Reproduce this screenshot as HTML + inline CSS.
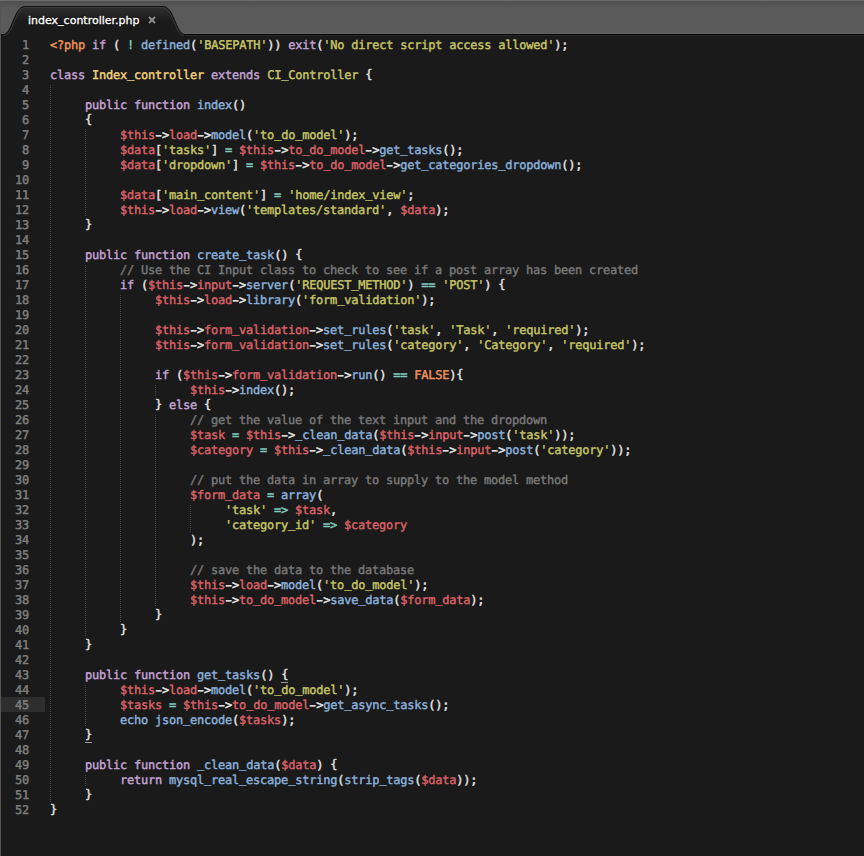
<!DOCTYPE html>
<html><head><meta charset="utf-8"><title>index_controller.php</title>
<style>
html,body{margin:0;padding:0;background:#1a1a1a;}
body{width:864px;height:856px;position:relative;overflow:hidden;font-family:"DejaVu Sans Mono","Liberation Mono",monospace;}
#tabbar{position:absolute;left:0;top:0;width:864px;height:36px;}
#tabtitle{position:absolute;left:28px;top:12.5px;font:11px/16px "DejaVu Sans","Liberation Sans",sans-serif;color:#fff;text-shadow:0 -1px 0 #000;white-space:pre;-webkit-text-stroke:0.3px #fff;}
#tabx{position:absolute;left:148px;top:16px;}
#lb{position:absolute;left:0;top:1px;width:1px;height:855px;background:#555;}
#hl{position:absolute;left:1px;top:697px;width:44px;height:15px;background:#2e2e2e;}
#code{position:absolute;left:0;top:38px;-webkit-text-stroke:0.4px;width:864px;font-size:12px;letter-spacing:-0.2246px;line-height:15px;color:#e6e6e6;white-space:pre;text-rendering:geometricPrecision;}
.ln{position:absolute;left:0;width:29px;text-align:right;color:#808080;height:15px;}
.cl{margin-left:50px;height:15px;}
.c{color:#797979}.s{color:#c7c666}.o{color:#f0955a}.r{color:#dc6268}.a{color:#80cabc}
.b{color:#8cb2de}.k{color:#c7a5d8}.y{color:#f6d37f}.u{border-bottom:1px solid #9c9c9c}.n{position:relative;top:-1px}.d{display:inline-block;width:7px;letter-spacing:0;transform:scaleX(1.55);transform-origin:50% 50%;-webkit-text-stroke:0.6px}
.g{position:absolute;width:1px;background:repeating-linear-gradient(to bottom,#4c4c4c 0,#4c4c4c 1px,transparent 1px,transparent 2px);}
</style></head><body>
<svg id="tabbar" width="864" height="36" viewBox="0 0 864 36">
<defs><linearGradient id="tb" gradientUnits="userSpaceOnUse" x1="0" y1="1" x2="0" y2="9"><stop offset="0" stop-color="#4f4f4f"/><stop offset="1" stop-color="#5a5a5a"/></linearGradient>
<linearGradient id="tf" gradientUnits="userSpaceOnUse" x1="0" y1="7" x2="0" y2="22"><stop offset="0" stop-color="#2f2f2f"/><stop offset="1" stop-color="#1a1a1a"/></linearGradient></defs>
<rect x="0" y="0" width="864" height="34" fill="url(#tb)"/>
<rect x="0" y="0" width="864" height="1" fill="#6c6c6c"/>
<rect x="0" y="33" width="864" height="1" fill="#626262"/>
<rect x="0" y="34" width="864" height="1" fill="#000"/>
<rect x="0" y="35" width="864" height="1" fill="#2b2b2b"/>
<path d="M1 34.5 L3 34.5 C 12.5 34.5, 13.5 6.5, 25 6.5 L 163 6.5 C 174.5 6.5, 175.5 34.5, 185 34.5 L 186 34.5 L 186 36 L 1 36 Z" fill="url(#tf)"/>
<path d="M4 35.5 C 13.5 35.5, 14.5 7.5, 25.5 7.5 L 162.5 7.5 C 173.5 7.5, 174.5 35.5, 184 35.5" fill="none" stroke="#3b3b3b" stroke-width="1"/>
<path d="M0 34.5 L3 34.5 C 12.5 34.5, 13.5 6.5, 25 6.5 L 163 6.5 C 174.5 6.5, 175.5 34.5, 185 34.5 L 187 34.5" fill="none" stroke="#0c0c0c" stroke-width="0.9"/>
</svg>
<div id="tabtitle">index<span class="n">_</span>controller.php</div>
<svg id="tabx" width="8" height="8" viewBox="0 0 8 8"><path d="M1 1 L7 7 M7 1 L1 7" stroke="#929292" stroke-width="1.8" fill="none"/></svg>
<div id="lb"></div>
<div id="hl"></div>
<i class="g" style="left:50px;top:85px;height:717px"></i><i class="g" style="left:85px;top:129px;height:88px"></i><i class="g" style="left:85px;top:265px;height:372px"></i><i class="g" style="left:85px;top:685px;height:42px"></i><i class="g" style="left:85px;top:775px;height:12px"></i><i class="g" style="left:120px;top:295px;height:327px"></i><i class="g" style="left:155px;top:385px;height:12px"></i><i class="g" style="left:155px;top:415px;height:192px"></i><i class="g" style="left:190px;top:505px;height:27px"></i>
<div id="code"><div class="ln">1</div><div class="cl"><span class="o">&lt;?php</span> <span class="k">if</span> ( <span class="a">!</span> <span class="b">defined</span>(<span class="s">'BASEPATH'</span>)) <span class="k">exit</span>(<span class="s">'No direct script access allowed'</span>);</div><div class="ln">2</div><div class="cl"></div><div class="ln">3</div><div class="cl"><span class="k">class</span> <span class="y">Index<span class="n">_</span>controller</span> <span class="k">extends</span> <span class="s">CI<span class="n">_</span>Controller</span> <span class="n">{</span></div><div class="ln">4</div><div class="cl"></div><div class="ln">5</div><div class="cl">     <span class="k">public</span> <span class="k">function</span> <span class="b">index</span>()</div><div class="ln">6</div><div class="cl">     <span class="n">{</span></div><div class="ln">7</div><div class="cl">          <span class="r">$this</span><span class="d">-</span>&gt;<span class="r">load</span><span class="d">-</span>&gt;<span class="b">model</span>(<span class="s">'to<span class="n">_</span>do<span class="n">_</span>model'</span>);</div><div class="ln">8</div><div class="cl">          <span class="r">$data</span>[<span class="s">'tasks'</span>] <span class="a">=</span> <span class="r">$this</span><span class="d">-</span>&gt;<span class="r">to<span class="n">_</span>do<span class="n">_</span>model</span><span class="d">-</span>&gt;<span class="b">get<span class="n">_</span>tasks</span>();</div><div class="ln">9</div><div class="cl">          <span class="r">$data</span>[<span class="s">'dropdown'</span>] <span class="a">=</span> <span class="r">$this</span><span class="d">-</span>&gt;<span class="r">to<span class="n">_</span>do<span class="n">_</span>model</span><span class="d">-</span>&gt;<span class="b">get<span class="n">_</span>categories<span class="n">_</span>dropdown</span>();</div><div class="ln">10</div><div class="cl"></div><div class="ln">11</div><div class="cl">          <span class="r">$data</span>[<span class="s">'main<span class="n">_</span>content'</span>] <span class="a">=</span> <span class="s">'home/index<span class="n">_</span>view'</span>;</div><div class="ln">12</div><div class="cl">          <span class="r">$this</span><span class="d">-</span>&gt;<span class="r">load</span><span class="d">-</span>&gt;<span class="b">view</span>(<span class="s">'templates/standard'</span>, <span class="r">$data</span>);</div><div class="ln">13</div><div class="cl">     <span class="n">}</span></div><div class="ln">14</div><div class="cl"></div><div class="ln">15</div><div class="cl">     <span class="k">public</span> <span class="k">function</span> <span class="b">create<span class="n">_</span>task</span>() <span class="n">{</span></div><div class="ln">16</div><div class="cl">          <span class="c">// Use the CI Input class to check to see if a post array has been created</span></div><div class="ln">17</div><div class="cl">          <span class="k">if</span> (<span class="r">$this</span><span class="d">-</span>&gt;<span class="r">input</span><span class="d">-</span>&gt;<span class="b">server</span>(<span class="s">'REQUEST<span class="n">_</span>METHOD'</span>) <span class="a">==</span> <span class="s">'POST'</span>) <span class="n">{</span></div><div class="ln">18</div><div class="cl">               <span class="r">$this</span><span class="d">-</span>&gt;<span class="r">load</span><span class="d">-</span>&gt;<span class="b">library</span>(<span class="s">'form<span class="n">_</span>validation'</span>);</div><div class="ln">19</div><div class="cl"></div><div class="ln">20</div><div class="cl">               <span class="r">$this</span><span class="d">-</span>&gt;<span class="r">form<span class="n">_</span>validation</span><span class="d">-</span>&gt;<span class="b">set<span class="n">_</span>rules</span>(<span class="s">'task'</span>, <span class="s">'Task'</span>, <span class="s">'required'</span>);</div><div class="ln">21</div><div class="cl">               <span class="r">$this</span><span class="d">-</span>&gt;<span class="r">form<span class="n">_</span>validation</span><span class="d">-</span>&gt;<span class="b">set<span class="n">_</span>rules</span>(<span class="s">'category'</span>, <span class="s">'Category'</span>, <span class="s">'required'</span>);</div><div class="ln">22</div><div class="cl"></div><div class="ln">23</div><div class="cl">               <span class="k">if</span> (<span class="r">$this</span><span class="d">-</span>&gt;<span class="r">form<span class="n">_</span>validation</span><span class="d">-</span>&gt;<span class="b">run</span>() <span class="a">==</span> <span class="o">FALSE</span>)<span class="n">{</span></div><div class="ln">24</div><div class="cl">                    <span class="r">$this</span><span class="d">-</span>&gt;<span class="b">index</span>();</div><div class="ln">25</div><div class="cl">               <span class="n">}</span> <span class="k">else</span> <span class="n">{</span></div><div class="ln">26</div><div class="cl">                    <span class="c">// get the value of the text input and the dropdown</span></div><div class="ln">27</div><div class="cl">                    <span class="r">$task</span> <span class="a">=</span> <span class="r">$this</span><span class="d">-</span>&gt;<span class="b"><span class="n">_</span>clean<span class="n">_</span>data</span>(<span class="r">$this</span><span class="d">-</span>&gt;<span class="r">input</span><span class="d">-</span>&gt;<span class="b">post</span>(<span class="s">'task'</span>));</div><div class="ln">28</div><div class="cl">                    <span class="r">$category</span> <span class="a">=</span> <span class="r">$this</span><span class="d">-</span>&gt;<span class="b"><span class="n">_</span>clean<span class="n">_</span>data</span>(<span class="r">$this</span><span class="d">-</span>&gt;<span class="r">input</span><span class="d">-</span>&gt;<span class="b">post</span>(<span class="s">'category'</span>));</div><div class="ln">29</div><div class="cl"></div><div class="ln">30</div><div class="cl">                    <span class="c">// put the data in array to supply to the model method</span></div><div class="ln">31</div><div class="cl">                    <span class="r">$form<span class="n">_</span>data</span> <span class="a">=</span> <span class="b">array</span>(</div><div class="ln">32</div><div class="cl">                         <span class="s">'task'</span> <span class="a">=&gt;</span> <span class="r">$task</span>,</div><div class="ln">33</div><div class="cl">                         <span class="s">'category<span class="n">_</span>id'</span> <span class="a">=&gt;</span> <span class="r">$category</span></div><div class="ln">34</div><div class="cl">                    );</div><div class="ln">35</div><div class="cl"></div><div class="ln">36</div><div class="cl">                    <span class="c">// save the data to the database</span></div><div class="ln">37</div><div class="cl">                    <span class="r">$this</span><span class="d">-</span>&gt;<span class="r">load</span><span class="d">-</span>&gt;<span class="b">model</span>(<span class="s">'to<span class="n">_</span>do<span class="n">_</span>model'</span>);</div><div class="ln">38</div><div class="cl">                    <span class="r">$this</span><span class="d">-</span>&gt;<span class="r">to<span class="n">_</span>do<span class="n">_</span>model</span><span class="d">-</span>&gt;<span class="b">save<span class="n">_</span>data</span>(<span class="r">$form<span class="n">_</span>data</span>);</div><div class="ln">39</div><div class="cl">               <span class="n">}</span></div><div class="ln">40</div><div class="cl">          <span class="n">}</span></div><div class="ln">41</div><div class="cl">     <span class="n">}</span></div><div class="ln">42</div><div class="cl"></div><div class="ln">43</div><div class="cl">     <span class="k">public</span> <span class="k">function</span> <span class="b">get<span class="n">_</span>tasks</span>() <span class="u"><span class="n">{</span></span></div><div class="ln">44</div><div class="cl">          <span class="r">$this</span><span class="d">-</span>&gt;<span class="r">load</span><span class="d">-</span>&gt;<span class="b">model</span>(<span class="s">'to<span class="n">_</span>do<span class="n">_</span>model'</span>);</div><div class="ln">45</div><div class="cl">          <span class="r">$tasks</span> <span class="a">=</span> <span class="r">$this</span><span class="d">-</span>&gt;<span class="r">to<span class="n">_</span>do<span class="n">_</span>model</span><span class="d">-</span>&gt;<span class="b">get<span class="n">_</span>async<span class="n">_</span>tasks</span>();</div><div class="ln">46</div><div class="cl">          <span class="b">echo</span> <span class="b">json<span class="n">_</span>encode</span>(<span class="r">$tasks</span>);</div><div class="ln">47</div><div class="cl">     <span class="u"><span class="n">}</span></span></div><div class="ln">48</div><div class="cl"></div><div class="ln">49</div><div class="cl">     <span class="k">public</span> <span class="k">function</span> <span class="b"><span class="n">_</span>clean<span class="n">_</span>data</span>(<span class="r">$data</span>) <span class="n">{</span></div><div class="ln">50</div><div class="cl">          <span class="k">return</span> <span class="b">mysql<span class="n">_</span>real<span class="n">_</span>escape<span class="n">_</span>string</span>(<span class="b">strip<span class="n">_</span>tags</span>(<span class="r">$data</span>));</div><div class="ln">51</div><div class="cl">     <span class="n">}</span></div><div class="ln">52</div><div class="cl"><span class="n">}</span></div></div>
</body></html>
